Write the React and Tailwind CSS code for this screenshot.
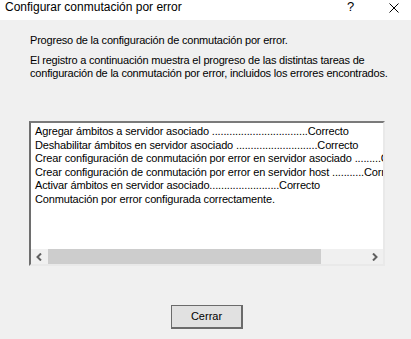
import React from "react";

function ArrowLeft() {
  return (
    <svg width="7" height="8" viewBox="0 0 7 8" className="block">
      <path d="M5 0.5 L1.5 4 L5 7.5" fill="none" stroke="#606060" strokeWidth="2" />
    </svg>
  );
}
function ArrowRight() {
  return (
    <svg width="7" height="8" viewBox="0 0 7 8" className="block">
      <path d="M2 0.5 L5.5 4 L2 7.5" fill="none" stroke="#606060" strokeWidth="2" />
    </svg>
  );
}

const d = (n) => ".".repeat(n);

export default function App() {
  const rows = [
    "Agregar ámbitos a servidor asociado " + d(33) + "Correcto",
    "Deshabilitar ámbitos en servidor asociado " + d(28) + "Correcto",
    "Crear configuración de conmutación por error en servidor asociado " + d(9) + "Correcto",
    "Crear configuración de conmutación por error en servidor host " + d(11) + "Correcto",
    "Activar ámbitos en servidor asociado" + d(24) + "Correcto",
    "Conmutación por error configurada correctamente.",
  ];
  return (
    <div className="w-[411px] h-[339px] bg-[#f0f0f0] overflow-hidden font-['Liberation_Sans',Arial,sans-serif] text-black flex flex-col">
      <div className="h-[20px] bg-white flex items-start shrink-0 text-[12px] leading-[14px]">
        <div className="pl-[5px] pt-[0px] flex-1">Configurar conmutación por error</div>
        <div className="w-[14px] pt-[0px] text-[13px] leading-[14px] mr-[28px]">?</div>
        <div className="w-[22px] flex justify-start pt-[3px]">
          <svg width="10" height="10" viewBox="0 0 10 10" className="block">
            <path d="M0.5 0.5 L9.5 9.5 M9.5 0.5 L0.5 9.5" stroke="#000" strokeWidth="1" />
          </svg>
        </div>
      </div>
      <div className="pl-[30px] pt-[14px] text-[11px] leading-[13px] tracking-[-0.2px]">
        <p>Progreso de la configuración de conmutación por error.</p>
        <p className="mt-[7px]">
          El registro a continuación muestra el progreso de las distintas tareas de
          <br />
          configuración de la conmutación por error, incluidos los errores encontrados.
        </p>
      </div>
      <div className="ml-[29px] mt-[41px] w-[356px] h-[145px] flex flex-col border-2 border-t-[#7a7a7a] border-l-[#6e6e6e] border-r-[#e9e9e9] border-b-[#e9e9e9] bg-white">
        <div className="flex-1 overflow-hidden whitespace-nowrap pl-[4px] pt-[2px] text-[11px] leading-[13.6px] tracking-[-0.15px]">
          {rows.map((r, i) => (
            <div key={i}>{r}</div>
          ))}
        </div>
        <div className="h-[15px] flex bg-[#f0f0f0] shrink-0">
          <div className="w-[17px] flex items-center justify-center">
            <ArrowLeft />
          </div>
          <div className="w-[273px] bg-[#cdcdcd]" />
          <div className="flex-1" />
          <div className="w-[17px] flex items-center justify-center">
            <ArrowRight />
          </div>
        </div>
      </div>
      <div className="ml-[171px] mt-[39px] w-[72px] h-[24px] bg-[#e1e1e1] border border-[#6b6b6b] border-r-2 border-b-2 flex items-center justify-center text-[11px]">
        Cerrar
      </div>
    </div>
  );
}
